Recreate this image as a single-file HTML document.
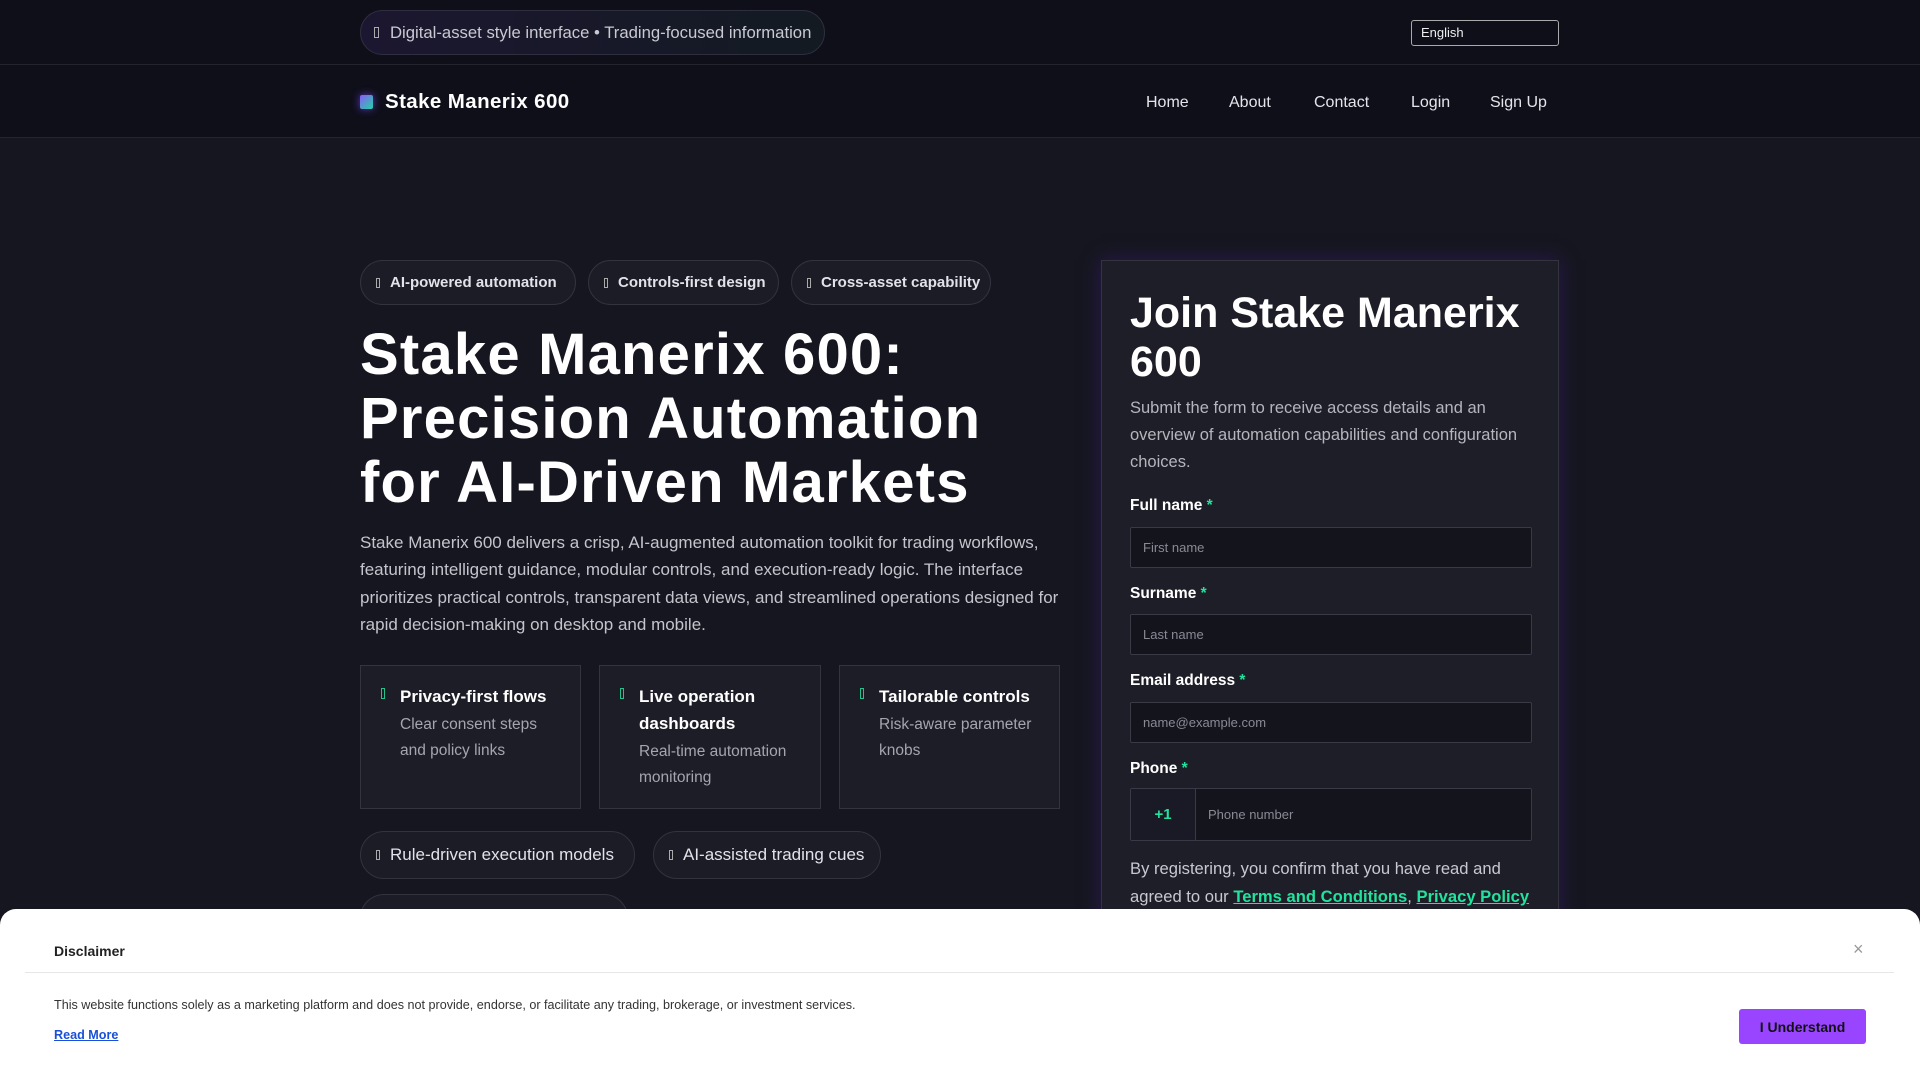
<!DOCTYPE html>
<html><head><meta charset="utf-8"><style>
*{box-sizing:border-box;margin:0;padding:0}
body{width:1920px;height:1080px;overflow:hidden;background:#161620;font-family:"Liberation Sans",sans-serif;color:#fff;position:relative}
.top{height:65px;background:#0f0f1a;border-bottom:1px solid #23232e;position:relative}
.tpill{position:absolute;left:360px;top:10px;height:45px;padding:0 13px;border:1px solid #2e2e3e;border-radius:23px;background:linear-gradient(90deg,#1c1730,#131a22);display:flex;align-items:center;color:#c9c9d2;font-size:16.7px;white-space:nowrap}
.tpill i{display:inline-block;width:5px;height:11px;border:1px solid #aaa;margin-right:11px}
.lang{position:absolute;left:1411px;top:20px;width:148px;height:26px;border:1px solid #aaa;border-radius:3px;font-size:13px;color:#eee;padding:4px 9px;background:#0f0f1a}
.nav{height:73px;background:#0f0f1a;border-bottom:1px solid #25252f;position:relative}
.logo{position:absolute;left:360px;top:25px;display:flex;align-items:center;font-weight:bold;font-size:20.5px;letter-spacing:0.4px}
.logo b{width:13px;height:14px;border-radius:2px;background:linear-gradient(135deg,#8b5cf6,#22d3a6);margin-right:12px;box-shadow:0 0 8px #5b3cc4}
.links{position:absolute;top:29px;font-size:16px;color:#e4e4ea}
.links span{position:absolute;white-space:nowrap}
.chip{position:absolute;top:260px;height:45px;border:1px solid #33333f;border-radius:23px;background:#1c1c26;display:flex;align-items:center;padding-left:15px;font-size:15px;font-weight:bold;color:#e2e2ea;white-space:nowrap}
.chip i,.pill i{display:inline-block;width:4px;height:10px;border:1px solid #aaa;margin-right:10px}
h1{position:absolute;left:360px;top:323px;font-size:58px;line-height:64px;font-weight:bold;letter-spacing:1.2px}
.para{position:absolute;left:360px;top:529px;width:710px;font-size:17px;line-height:27.4px;color:#c4c4cc}
.card{position:absolute;top:665px;height:144px;background:#1d1d27;border:1px solid #34343f;padding:17px 20px 0 39px}
.card i{position:absolute;left:20px;top:22px;width:4px;height:11px;border:1px solid #22c28a}
.card h3{font-size:17px;line-height:27px;font-weight:bold}
.card p{font-size:15.5px;line-height:26px;color:#a5a5b0;margin-top:2px}
.pill{position:absolute;height:48px;border:1px solid #333340;border-radius:24px;background:#1c1c26;display:flex;align-items:center;padding-left:15px;font-size:17px;color:#e2e2ea;white-space:nowrap}
.form{position:absolute;left:1101px;top:260px;width:458px;height:700px;background:#1e1e28;border:1px solid #34343f;box-shadow:0 0 18px #2a1a50;padding:28px}
.form h2{font-size:43px;line-height:49px;font-weight:bold;white-space:nowrap}
.form .d{font-size:16.5px;line-height:27px;color:#b5b5be;margin-top:8px}
.lab{position:absolute;left:28px;font-size:15.5px;font-weight:bold}
.lab em{color:#22e39c;font-style:normal}
.in{position:absolute;left:28px;width:402px;height:41px;background:#14141d;border:1px solid #3a3a46;border-radius:2px;font-size:13px;color:#8a8a95;padding:0 12px;display:flex;align-items:center}
.cons{position:absolute;left:28px;top:594px;width:410px;font-size:16.6px;line-height:28px;color:#c8c8d0}
.cons a{color:#22e39c;font-weight:bold;text-decoration:underline}
.modal{position:absolute;left:0;top:909px;width:1920px;height:171px;background:#fff;border-radius:16px 16px 0 0;color:#222}
</style></head><body>
<div class="top"><div class="tpill"><i></i>Digital-asset style interface • Trading-focused information</div><div class="lang">English</div></div>
<div class="nav"><div class="logo"><b></b>Stake Manerix 600</div>
<div class="links"><span style="left:1146px">Home</span><span style="left:1229px">About</span><span style="left:1314px">Contact</span><span style="left:1411px">Login</span><span style="left:1490px">Sign Up</span></div></div>
<div class="chip" style="left:360px;width:216px"><i></i>AI-powered automation</div>
<div class="chip" style="left:588px;width:191px"><i></i>Controls-first design</div>
<div class="chip" style="left:791px;width:200px"><i></i>Cross-asset capability</div>
<h1>Stake Manerix 600:<br>Precision Automation<br>for AI-Driven Markets</h1>
<div class="para">Stake Manerix 600 delivers a crisp, AI-augmented automation toolkit for trading workflows, featuring intelligent guidance, modular controls, and execution-ready logic. The interface prioritizes practical controls, transparent data views, and streamlined operations designed for rapid decision-making on desktop and mobile.</div>
<div class="card" style="left:360px;width:221px"><i></i><h3>Privacy-first flows</h3><p>Clear consent steps and policy links</p></div>
<div class="card" style="left:599px;width:222px"><i></i><h3>Live operation dashboards</h3><p>Real-time automation monitoring</p></div>
<div class="card" style="left:839px;width:221px"><i></i><h3>Tailorable controls</h3><p>Risk-aware parameter knobs</p></div>
<div class="pill" style="left:360px;top:831px;width:275px"><i></i>Rule-driven execution models</div>
<div class="pill" style="left:653px;top:831px;width:228px"><i></i>AI-assisted trading cues</div>
<div class="pill" style="left:360px;top:894px;width:268px"></div>
<div class="form"><h2>Join Stake Manerix<br>600</h2><div class="d">Submit the form to receive access details and an overview of automation capabilities and configuration choices.</div>
<div class="lab" style="top:236px">Full name <em>*</em></div><div class="in" style="top:266px">First name</div>
<div class="lab" style="top:324px">Surname <em>*</em></div><div class="in" style="top:353px">Last name</div>
<div class="lab" style="top:411px">Email address <em>*</em></div><div class="in" style="top:441px">name@example.com</div>
<div class="lab" style="top:499px">Phone <em>*</em></div><div class="in" style="top:527px;height:53px;padding:0"><span style="width:65px;height:100%;border-right:1px solid #3a3a46;display:flex;align-items:center;justify-content:center;color:#22e39c;font-weight:bold;font-size:15px;background:#1a1a26">+1</span><span style="padding-left:12px">Phone number</span></div>
<div class="cons">By registering, you confirm that you have read and agreed to our <a>Terms and Conditions</a>, <a>Privacy Policy</a></div></div>
<div class="modal">
<div style="position:absolute;left:54px;top:34px;font-size:14px;font-weight:bold">Disclaimer</div>
<div style="position:absolute;left:1853px;top:30px;font-size:18px;color:#999">×</div>
<div style="position:absolute;left:25px;top:63px;width:1869px;height:1px;background:#e6e6e6"></div>
<div style="position:absolute;left:54px;top:89px;font-size:12.6px;color:#333">This website functions solely as a marketing platform and does not provide, endorse, or facilitate any trading, brokerage, or investment services.</div>
<div style="position:absolute;left:54px;top:119px;font-size:12.6px;color:#1a4fd8;text-decoration:underline;font-weight:bold">Read More</div>
<div style="position:absolute;left:1739px;top:100px;width:127px;height:35px;background:#9945ff;border-radius:3px;display:flex;align-items:center;justify-content:center;font-size:14px;font-weight:bold;color:#111">I Understand</div>
</div>
</body></html>
